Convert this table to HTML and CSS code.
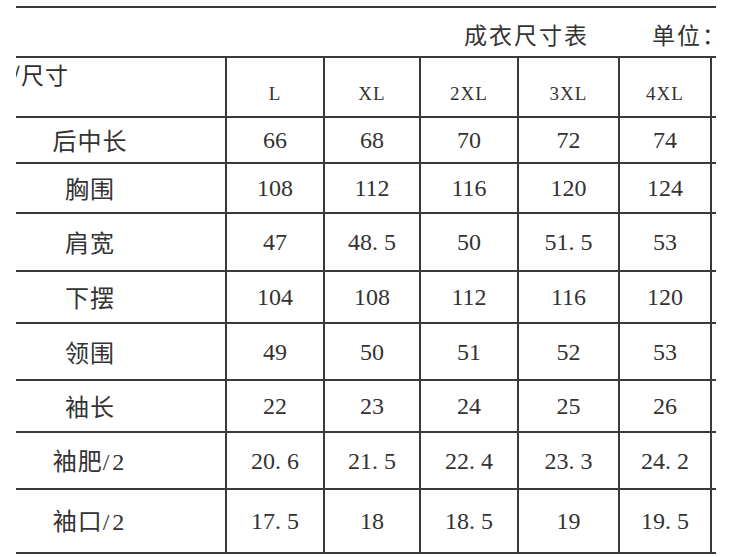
FILE: index.html
```html
<!DOCTYPE html>
<html lang="zh-CN">
<head>
<meta charset="utf-8">
<title>成衣尺寸表</title>
<link rel="stylesheet" href="styles.css">
</head>
<body>
<div class="clip">
  <div class="sheet">
    <div class="title"><span class="name">成衣尺寸表</span><span class="unit">单位：cm</span></div>

    <div class="c corner"><span>部位/尺寸</span></div>
    <div class="c size">L</div>
    <div class="c size">XL</div>
    <div class="c size">2XL</div>
    <div class="c size">3XL</div>
    <div class="c size">4XL</div>
    <div class="c"></div>

    <div class="c label"><span>后中长</span></div>
    <div class="c num">66</div><div class="c num">68</div><div class="c num">70</div><div class="c num">72</div><div class="c num">74</div><div class="c"></div>

    <div class="c label"><span>胸围</span></div>
    <div class="c num">108</div><div class="c num">112</div><div class="c num">116</div><div class="c num">120</div><div class="c num">124</div><div class="c"></div>

    <div class="c label"><span>肩宽</span></div>
    <div class="c num">47</div><div class="c num"><span>48<span class="dot">.</span>5</span></div><div class="c num">50</div><div class="c num"><span>51<span class="dot">.</span>5</span></div><div class="c num">53</div><div class="c"></div>

    <div class="c label"><span>下摆</span></div>
    <div class="c num">104</div><div class="c num">108</div><div class="c num">112</div><div class="c num">116</div><div class="c num">120</div><div class="c"></div>

    <div class="c label"><span>领围</span></div>
    <div class="c num">49</div><div class="c num">50</div><div class="c num">51</div><div class="c num">52</div><div class="c num">53</div><div class="c"></div>

    <div class="c label"><span>袖长</span></div>
    <div class="c num">22</div><div class="c num">23</div><div class="c num">24</div><div class="c num">25</div><div class="c num">26</div><div class="c"></div>

    <div class="c label"><span>袖肥<span class="half">/2</span></span></div>
    <div class="c num"><span>20<span class="dot">.</span>6</span></div><div class="c num"><span>21<span class="dot">.</span>5</span></div><div class="c num"><span>22<span class="dot">.</span>4</span></div><div class="c num"><span>23<span class="dot">.</span>3</span></div><div class="c num"><span>24<span class="dot">.</span>2</span></div><div class="c"></div>

    <div class="c label"><span>袖口<span class="half">/2</span></span></div>
    <div class="c num"><span>17<span class="dot">.</span>5</span></div><div class="c num">18</div><div class="c num"><span>18<span class="dot">.</span>5</span></div><div class="c num">19</div><div class="c num"><span>19<span class="dot">.</span>5</span></div><div class="c"></div>
  </div>
</div>
</body>
</html>
```

FILE: styles.css
```css
html, body {
  margin: 0;
  padding: 0;
  background: #ffffff;
}

body {
  color: #2e2e2e;
  font-family: "Noto Sans CJK SC", "Liberation Sans", sans-serif;
}

.clip {
  width: 700px;
  margin: 6px 0 0 16px;
  overflow: hidden;
}

.sheet {
  margin-left: -61px;
  width: 857px;
  display: grid;
  grid-template-columns: 272px 98px 96px 98px 101px 92px 100px;
  grid-template-rows: 50px 60px 46px 50px 58px 52px 57px 52px 57px 64px;
  border-top: 2px solid #3a3a3a;
}

.title {
  grid-column: 1 / -1;
  border-bottom: 2px solid #3a3a3a;
  display: flex;
  align-items: center;
  padding: 4px 0 0 509px;
  box-sizing: border-box;
  font-size: 23px;
  line-height: 1;
  letter-spacing: 2px;
  color: #333;
}

.title .unit {
  margin-left: 63px;
}

.c {
  box-sizing: border-box;
  border-right: 2px solid #3a3a3a;
  border-bottom: 2px solid #3a3a3a;
  display: flex;
  align-items: center;
  justify-content: center;
  line-height: 1;
  white-space: nowrap;
}

.corner {
  align-items: flex-start;
  justify-content: flex-start;
  padding: 5px 0 0 8px;
  font-size: 23px;
  letter-spacing: 1px;
}

.size {
  font-family: "Liberation Serif", serif;
  font-size: 19px;
  letter-spacing: 1px;
  padding-top: 12px;
  color: #333;
}

.label {
  font-size: 24px;
  letter-spacing: 1px;
  color: #333;
}

.label .half {
  font-family: "Liberation Serif", serif;
  font-size: 24px;
  letter-spacing: 3px;
}

.num {
  font-family: "Liberation Serif", serif;
  font-size: 24px;
  color: #333;
}

.dot {
  padding-right: 0.25em;
}
```
